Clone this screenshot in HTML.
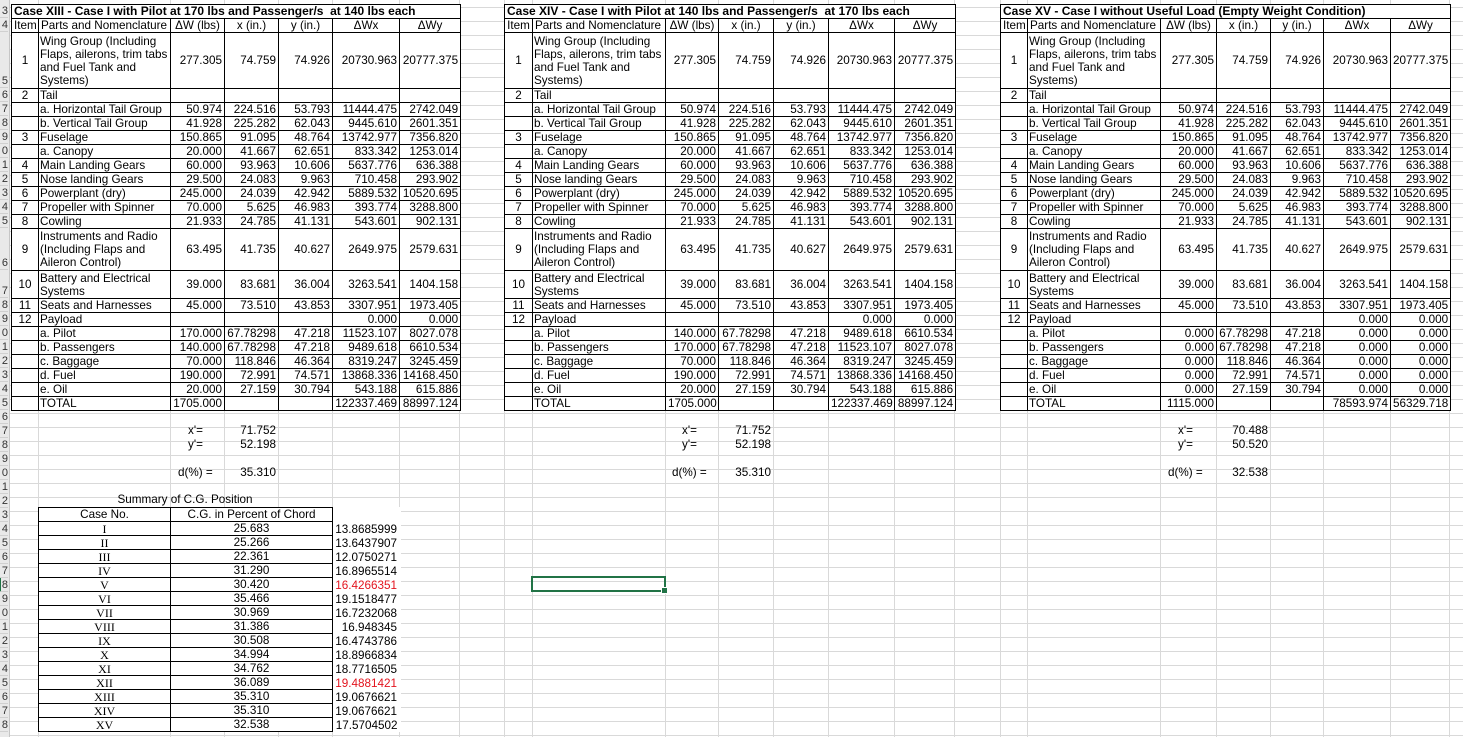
<!DOCTYPE html>
<html><head><meta charset="utf-8"><style>
*{margin:0;padding:0;box-sizing:border-box}
body{width:1463px;height:737px;overflow:hidden;position:relative;background:#fff;font-family:"Liberation Sans",Arial,sans-serif;font-size:11.7px;color:#000;
background-image:repeating-linear-gradient(to bottom,transparent 0,transparent 3px,#d9d9d9 3px,#d9d9d9 4px,transparent 4px,transparent 14px);background-size:100% 14px;background-position:0 4px}
.v{position:absolute;top:0;height:737px;width:1px;background:#d9d9d9}
.rh{position:absolute;left:0;top:0;width:10px;height:737px;background:#e9e9e9;border-right:1px solid #c6c6c6;overflow:hidden}
.rh div{position:absolute;right:1px;height:14px;line-height:14px;font-size:11px;color:#333;border-bottom:1px solid #d0d0d0;width:10px;text-align:right}
table.t{position:absolute;top:4px;border-collapse:collapse;table-layout:fixed;background:#fff}
table.t td{border:1px solid #000;padding:0 2px;height:14px;line-height:13px;white-space:nowrap;overflow:hidden;text-align:right;vertical-align:middle}
table.t td.c{text-align:center}
table.t td.l{text-align:left;padding-left:1px}
table.t tr.h td{text-align:center}
table.t td.ti{font-weight:bold;text-align:left;font-size:12px}
.lab{position:absolute;height:14px;line-height:14px;white-space:nowrap}
table.s{position:absolute;left:38px;top:507px;border-collapse:collapse;table-layout:fixed;background:#fff}
table.s td{height:14px;line-height:12px;border:1px solid #000;text-align:center;white-space:nowrap;padding:0;overflow:hidden}
table.s td.r{border:none;text-align:right;padding-right:3px;background:transparent;line-height:12px;vertical-align:bottom}
table.s td.n{font-family:"Liberation Serif",serif;font-size:12px}
.red{color:#e3141e}
.sel{position:absolute;left:531px;top:576px;width:135px;height:16px;border:2px solid #217346}
.sel:after{content:"";position:absolute;right:-4px;bottom:-4px;width:5px;height:5px;background:#217346;border:1px solid #fff}
</style></head><body>
<div class="v" style="left:38px"></div><div class="v" style="left:170px"></div><div class="v" style="left:224px"></div><div class="v" style="left:278px"></div><div class="v" style="left:332px"></div><div class="v" style="left:399px"></div><div class="v" style="left:459px"></div><div class="v" style="left:504px"></div><div class="v" style="left:532px"></div><div class="v" style="left:665px"></div><div class="v" style="left:718px"></div><div class="v" style="left:773px"></div><div class="v" style="left:828px"></div><div class="v" style="left:894px"></div><div class="v" style="left:954px"></div><div class="v" style="left:1000px"></div><div class="v" style="left:1027px"></div><div class="v" style="left:1160px"></div><div class="v" style="left:1216px"></div><div class="v" style="left:1270px"></div><div class="v" style="left:1323px"></div><div class="v" style="left:1390px"></div><div class="v" style="left:1449px"></div>

<div class="rh">
<div style="top:4px">3</div><div style="top:18px">4</div><div style="top:74px">5</div><div style="top:88px">6</div><div style="top:102px">7</div><div style="top:116px">8</div><div style="top:130px">9</div><div style="top:144px">0</div><div style="top:158px">1</div><div style="top:172px">2</div><div style="top:186px">3</div><div style="top:200px">4</div><div style="top:214px">5</div><div style="top:256px">6</div><div style="top:284px">7</div><div style="top:298px">8</div><div style="top:312px">9</div><div style="top:326px">0</div><div style="top:340px">1</div><div style="top:354px">2</div><div style="top:368px">3</div><div style="top:382px">4</div><div style="top:396px">5</div><div style="top:410px">6</div><div style="top:424px">7</div><div style="top:438px">8</div><div style="top:452px">9</div><div style="top:466px">0</div><div style="top:480px">1</div><div style="top:494px">2</div><div style="top:508px">3</div><div style="top:522px">4</div><div style="top:536px">5</div><div style="top:550px">6</div><div style="top:564px">7</div><div style="top:578px;border-left:3px solid #217346">8</div><div style="top:592px">9</div><div style="top:606px">0</div><div style="top:620px">1</div><div style="top:634px">2</div><div style="top:648px">3</div><div style="top:662px">4</div><div style="top:676px">5</div><div style="top:690px">6</div><div style="top:704px">7</div><div style="top:718px">8</div>
</div>

<!-- TABLE 1 -->
<table class="t" style="left:11px;width:449px">
<colgroup><col style="width:27px"><col style="width:132px"><col style="width:54px"><col style="width:54px"><col style="width:54px"><col style="width:67px"><col style="width:61px"></colgroup>
<tr><td colspan="7" class="ti">Case XIII - Case I with Pilot at 170 lbs and Passenger/s&nbsp; at 140 lbs each</td></tr>
<tr class="h"><td>Item</td><td style="text-align:left">Parts and Nomenclature</td><td>ΔW (lbs)</td><td>x (in.)</td><td>y (in.)</td><td>ΔWx</td><td>ΔWy</td></tr>
<tr><td class="c" style="height:56px">1</td><td class="l">Wing Group (Including<br>Flaps, ailerons, trim tabs<br>and Fuel Tank and<br>Systems)</td><td>277.305</td><td>74.759</td><td>74.926</td><td>20730.963</td><td>20777.375</td></tr>
<tr><td class="c">2</td><td class="l">Tail</td><td></td><td></td><td></td><td></td><td></td></tr>
<tr><td></td><td class="l">a. Horizontal Tail Group</td><td>50.974</td><td>224.516</td><td>53.793</td><td>11444.475</td><td>2742.049</td></tr>
<tr><td></td><td class="l">b. Vertical Tail Group</td><td>41.928</td><td>225.282</td><td>62.043</td><td>9445.610</td><td>2601.351</td></tr>
<tr><td class="c">3</td><td class="l">Fuselage</td><td>150.865</td><td>91.095</td><td>48.764</td><td>13742.977</td><td>7356.820</td></tr>
<tr><td></td><td class="l">a. Canopy</td><td>20.000</td><td>41.667</td><td>62.651</td><td>833.342</td><td>1253.014</td></tr>
<tr><td class="c">4</td><td class="l">Main Landing Gears</td><td>60.000</td><td>93.963</td><td>10.606</td><td>5637.776</td><td>636.388</td></tr>
<tr><td class="c">5</td><td class="l">Nose landing Gears</td><td>29.500</td><td>24.083</td><td>9.963</td><td>710.458</td><td>293.902</td></tr>
<tr><td class="c">6</td><td class="l">Powerplant (dry)</td><td>245.000</td><td>24.039</td><td>42.942</td><td>5889.532</td><td>10520.695</td></tr>
<tr><td class="c">7</td><td class="l">Propeller with Spinner</td><td>70.000</td><td>5.625</td><td>46.983</td><td>393.774</td><td>3288.800</td></tr>
<tr><td class="c">8</td><td class="l">Cowling</td><td>21.933</td><td>24.785</td><td>41.131</td><td>543.601</td><td>902.131</td></tr>
<tr><td class="c" style="height:42px">9</td><td class="l">Instruments and Radio<br>(Including Flaps and<br>Aileron Control)</td><td>63.495</td><td>41.735</td><td>40.627</td><td>2649.975</td><td>2579.631</td></tr>
<tr><td class="c" style="height:28px">10</td><td class="l">Battery and Electrical<br>Systems</td><td>39.000</td><td>83.681</td><td>36.004</td><td>3263.541</td><td>1404.158</td></tr>
<tr><td class="c">11</td><td class="l">Seats and Harnesses</td><td>45.000</td><td>73.510</td><td>43.853</td><td>3307.951</td><td>1973.405</td></tr>
<tr><td class="c">12</td><td class="l">Payload</td><td></td><td></td><td></td><td>0.000</td><td>0.000</td></tr>
<tr><td></td><td class="l">a. Pilot</td><td>170.000</td><td>67.78298</td><td>47.218</td><td>11523.107</td><td>8027.078</td></tr>
<tr><td></td><td class="l">b. Passengers</td><td>140.000</td><td>67.78298</td><td>47.218</td><td>9489.618</td><td>6610.534</td></tr>
<tr><td></td><td class="l">c. Baggage</td><td>70.000</td><td>118.846</td><td>46.364</td><td>8319.247</td><td>3245.459</td></tr>
<tr><td></td><td class="l">d. Fuel</td><td>190.000</td><td>72.991</td><td>74.571</td><td>13868.336</td><td>14168.450</td></tr>
<tr><td></td><td class="l">e. Oil</td><td>20.000</td><td>27.159</td><td>30.794</td><td>543.188</td><td>615.886</td></tr>
<tr><td></td><td class="l">TOTAL</td><td>1705.000</td><td></td><td></td><td>122337.469</td><td>88997.124</td></tr>
</table>

<!-- TABLE 2 -->
<table class="t" style="left:504px;width:451px">
<colgroup><col style="width:28px"><col style="width:133px"><col style="width:53px"><col style="width:55px"><col style="width:55px"><col style="width:66px"><col style="width:61px"></colgroup>
<tr><td colspan="7" class="ti">Case XIV - Case I with Pilot at 140 lbs and Passenger/s&nbsp; at 170 lbs each</td></tr>
<tr class="h"><td>Item</td><td style="text-align:left">Parts and Nomenclature</td><td>ΔW (lbs)</td><td>x (in.)</td><td>y (in.)</td><td>ΔWx</td><td>ΔWy</td></tr>
<tr><td class="c" style="height:56px">1</td><td class="l">Wing Group (Including<br>Flaps, ailerons, trim tabs<br>and Fuel Tank and<br>Systems)</td><td>277.305</td><td>74.759</td><td>74.926</td><td>20730.963</td><td>20777.375</td></tr>
<tr><td class="c">2</td><td class="l">Tail</td><td></td><td></td><td></td><td></td><td></td></tr>
<tr><td></td><td class="l">a. Horizontal Tail Group</td><td>50.974</td><td>224.516</td><td>53.793</td><td>11444.475</td><td>2742.049</td></tr>
<tr><td></td><td class="l">b. Vertical Tail Group</td><td>41.928</td><td>225.282</td><td>62.043</td><td>9445.610</td><td>2601.351</td></tr>
<tr><td class="c">3</td><td class="l">Fuselage</td><td>150.865</td><td>91.095</td><td>48.764</td><td>13742.977</td><td>7356.820</td></tr>
<tr><td></td><td class="l">a. Canopy</td><td>20.000</td><td>41.667</td><td>62.651</td><td>833.342</td><td>1253.014</td></tr>
<tr><td class="c">4</td><td class="l">Main Landing Gears</td><td>60.000</td><td>93.963</td><td>10.606</td><td>5637.776</td><td>636.388</td></tr>
<tr><td class="c">5</td><td class="l">Nose landing Gears</td><td>29.500</td><td>24.083</td><td>9.963</td><td>710.458</td><td>293.902</td></tr>
<tr><td class="c">6</td><td class="l">Powerplant (dry)</td><td>245.000</td><td>24.039</td><td>42.942</td><td>5889.532</td><td>10520.695</td></tr>
<tr><td class="c">7</td><td class="l">Propeller with Spinner</td><td>70.000</td><td>5.625</td><td>46.983</td><td>393.774</td><td>3288.800</td></tr>
<tr><td class="c">8</td><td class="l">Cowling</td><td>21.933</td><td>24.785</td><td>41.131</td><td>543.601</td><td>902.131</td></tr>
<tr><td class="c" style="height:42px">9</td><td class="l">Instruments and Radio<br>(Including Flaps and<br>Aileron Control)</td><td>63.495</td><td>41.735</td><td>40.627</td><td>2649.975</td><td>2579.631</td></tr>
<tr><td class="c" style="height:28px">10</td><td class="l">Battery and Electrical<br>Systems</td><td>39.000</td><td>83.681</td><td>36.004</td><td>3263.541</td><td>1404.158</td></tr>
<tr><td class="c">11</td><td class="l">Seats and Harnesses</td><td>45.000</td><td>73.510</td><td>43.853</td><td>3307.951</td><td>1973.405</td></tr>
<tr><td class="c">12</td><td class="l">Payload</td><td></td><td></td><td></td><td>0.000</td><td>0.000</td></tr>
<tr><td></td><td class="l">a. Pilot</td><td>140.000</td><td>67.78298</td><td>47.218</td><td>9489.618</td><td>6610.534</td></tr>
<tr><td></td><td class="l">b. Passengers</td><td>170.000</td><td>67.78298</td><td>47.218</td><td>11523.107</td><td>8027.078</td></tr>
<tr><td></td><td class="l">c. Baggage</td><td>70.000</td><td>118.846</td><td>46.364</td><td>8319.247</td><td>3245.459</td></tr>
<tr><td></td><td class="l">d. Fuel</td><td>190.000</td><td>72.991</td><td>74.571</td><td>13868.336</td><td>14168.450</td></tr>
<tr><td></td><td class="l">e. Oil</td><td>20.000</td><td>27.159</td><td>30.794</td><td>543.188</td><td>615.886</td></tr>
<tr><td></td><td class="l">TOTAL</td><td>1705.000</td><td></td><td></td><td>122337.469</td><td>88997.124</td></tr>
</table>

<!-- TABLE 3 -->
<table class="t" style="left:1000px;width:450px">
<colgroup><col style="width:27px"><col style="width:133px"><col style="width:56px"><col style="width:54px"><col style="width:53px"><col style="width:67px"><col style="width:60px"></colgroup>
<tr><td colspan="7" class="ti">Case XV - Case I without Useful Load (Empty Weight Condition)</td></tr>
<tr class="h"><td>Item</td><td style="text-align:left">Parts and Nomenclature</td><td>ΔW (lbs)</td><td>x (in.)</td><td>y (in.)</td><td>ΔWx</td><td>ΔWy</td></tr>
<tr><td class="c" style="height:56px">1</td><td class="l">Wing Group (Including<br>Flaps, ailerons, trim tabs<br>and Fuel Tank and<br>Systems)</td><td>277.305</td><td>74.759</td><td>74.926</td><td>20730.963</td><td>20777.375</td></tr>
<tr><td class="c">2</td><td class="l">Tail</td><td></td><td></td><td></td><td></td><td></td></tr>
<tr><td></td><td class="l">a. Horizontal Tail Group</td><td>50.974</td><td>224.516</td><td>53.793</td><td>11444.475</td><td>2742.049</td></tr>
<tr><td></td><td class="l">b. Vertical Tail Group</td><td>41.928</td><td>225.282</td><td>62.043</td><td>9445.610</td><td>2601.351</td></tr>
<tr><td class="c">3</td><td class="l">Fuselage</td><td>150.865</td><td>91.095</td><td>48.764</td><td>13742.977</td><td>7356.820</td></tr>
<tr><td></td><td class="l">a. Canopy</td><td>20.000</td><td>41.667</td><td>62.651</td><td>833.342</td><td>1253.014</td></tr>
<tr><td class="c">4</td><td class="l">Main Landing Gears</td><td>60.000</td><td>93.963</td><td>10.606</td><td>5637.776</td><td>636.388</td></tr>
<tr><td class="c">5</td><td class="l">Nose landing Gears</td><td>29.500</td><td>24.083</td><td>9.963</td><td>710.458</td><td>293.902</td></tr>
<tr><td class="c">6</td><td class="l">Powerplant (dry)</td><td>245.000</td><td>24.039</td><td>42.942</td><td>5889.532</td><td>10520.695</td></tr>
<tr><td class="c">7</td><td class="l">Propeller with Spinner</td><td>70.000</td><td>5.625</td><td>46.983</td><td>393.774</td><td>3288.800</td></tr>
<tr><td class="c">8</td><td class="l">Cowling</td><td>21.933</td><td>24.785</td><td>41.131</td><td>543.601</td><td>902.131</td></tr>
<tr><td class="c" style="height:42px">9</td><td class="l">Instruments and Radio<br>(Including Flaps and<br>Aileron Control)</td><td>63.495</td><td>41.735</td><td>40.627</td><td>2649.975</td><td>2579.631</td></tr>
<tr><td class="c" style="height:28px">10</td><td class="l">Battery and Electrical<br>Systems</td><td>39.000</td><td>83.681</td><td>36.004</td><td>3263.541</td><td>1404.158</td></tr>
<tr><td class="c">11</td><td class="l">Seats and Harnesses</td><td>45.000</td><td>73.510</td><td>43.853</td><td>3307.951</td><td>1973.405</td></tr>
<tr><td class="c">12</td><td class="l">Payload</td><td></td><td></td><td></td><td>0.000</td><td>0.000</td></tr>
<tr><td></td><td class="l">a. Pilot</td><td>0.000</td><td>67.78298</td><td>47.218</td><td>0.000</td><td>0.000</td></tr>
<tr><td></td><td class="l">b. Passengers</td><td>0.000</td><td>67.78298</td><td>47.218</td><td>0.000</td><td>0.000</td></tr>
<tr><td></td><td class="l">c. Baggage</td><td>0.000</td><td>118.846</td><td>46.364</td><td>0.000</td><td>0.000</td></tr>
<tr><td></td><td class="l">d. Fuel</td><td>0.000</td><td>72.991</td><td>74.571</td><td>0.000</td><td>0.000</td></tr>
<tr><td></td><td class="l">e. Oil</td><td>0.000</td><td>27.159</td><td>30.794</td><td>0.000</td><td>0.000</td></tr>
<tr><td></td><td class="l">TOTAL</td><td>1115.000</td><td></td><td></td><td>78593.974</td><td>56329.718</td></tr>
</table>

<!-- x', y', d -->
<div class="lab" style="left:188px;top:424px">x'=</div><div class="lab" style="left:224px;top:424px;width:52px;text-align:right">71.752</div>
<div class="lab" style="left:188px;top:438px">y'=</div><div class="lab" style="left:224px;top:438px;width:52px;text-align:right">52.198</div>
<div class="lab" style="left:178px;top:466px">d(%) =</div><div class="lab" style="left:224px;top:466px;width:52px;text-align:right">35.310</div>

<div class="lab" style="left:682px;top:424px">x'=</div><div class="lab" style="left:718px;top:424px;width:53px;text-align:right">71.752</div>
<div class="lab" style="left:682px;top:438px">y'=</div><div class="lab" style="left:718px;top:438px;width:53px;text-align:right">52.198</div>
<div class="lab" style="left:672px;top:466px">d(%) =</div><div class="lab" style="left:718px;top:466px;width:53px;text-align:right">35.310</div>

<div class="lab" style="left:1178px;top:424px">x'=</div><div class="lab" style="left:1216px;top:424px;width:52px;text-align:right">70.488</div>
<div class="lab" style="left:1178px;top:438px">y'=</div><div class="lab" style="left:1216px;top:438px;width:52px;text-align:right">50.520</div>
<div class="lab" style="left:1168px;top:466px">d(%) =</div><div class="lab" style="left:1216px;top:466px;width:52px;text-align:right">32.538</div>

<!-- Summary -->
<div class="lab" style="left:38px;top:493px;width:294px;text-align:center">Summary of C.G. Position</div>
<table class="s" style="width:362px">
<colgroup><col style="width:132px"><col style="width:162px"><col style="width:68px"></colgroup>
<tr><td>Case No.</td><td>C.G. in Percent of Chord</td><td class="r"></td></tr>
<tr><td class="n">I</td><td>25.683</td><td class="r">13.8685999</td></tr>
<tr><td class="n">II</td><td>25.266</td><td class="r">13.6437907</td></tr>
<tr><td class="n">III</td><td>22.361</td><td class="r">12.0750271</td></tr>
<tr><td class="n">IV</td><td>31.290</td><td class="r">16.8965514</td></tr>
<tr><td class="n">V</td><td>30.420</td><td class="r red">16.4266351</td></tr>
<tr><td class="n">VI</td><td>35.466</td><td class="r">19.1518477</td></tr>
<tr><td class="n">VII</td><td>30.969</td><td class="r">16.7232068</td></tr>
<tr><td class="n">VIII</td><td>31.386</td><td class="r">16.948345</td></tr>
<tr><td class="n">IX</td><td>30.508</td><td class="r">16.4743786</td></tr>
<tr><td class="n">X</td><td>34.994</td><td class="r">18.8966834</td></tr>
<tr><td class="n">XI</td><td>34.762</td><td class="r">18.7716505</td></tr>
<tr><td class="n">XII</td><td>36.089</td><td class="r red">19.4881421</td></tr>
<tr><td class="n">XIII</td><td>35.310</td><td class="r">19.0676621</td></tr>
<tr><td class="n">XIV</td><td>35.310</td><td class="r">19.0676621</td></tr>
<tr><td class="n">XV</td><td>32.538</td><td class="r">17.5704502</td></tr>
</table>

<div class="sel"></div>
</body></html>
